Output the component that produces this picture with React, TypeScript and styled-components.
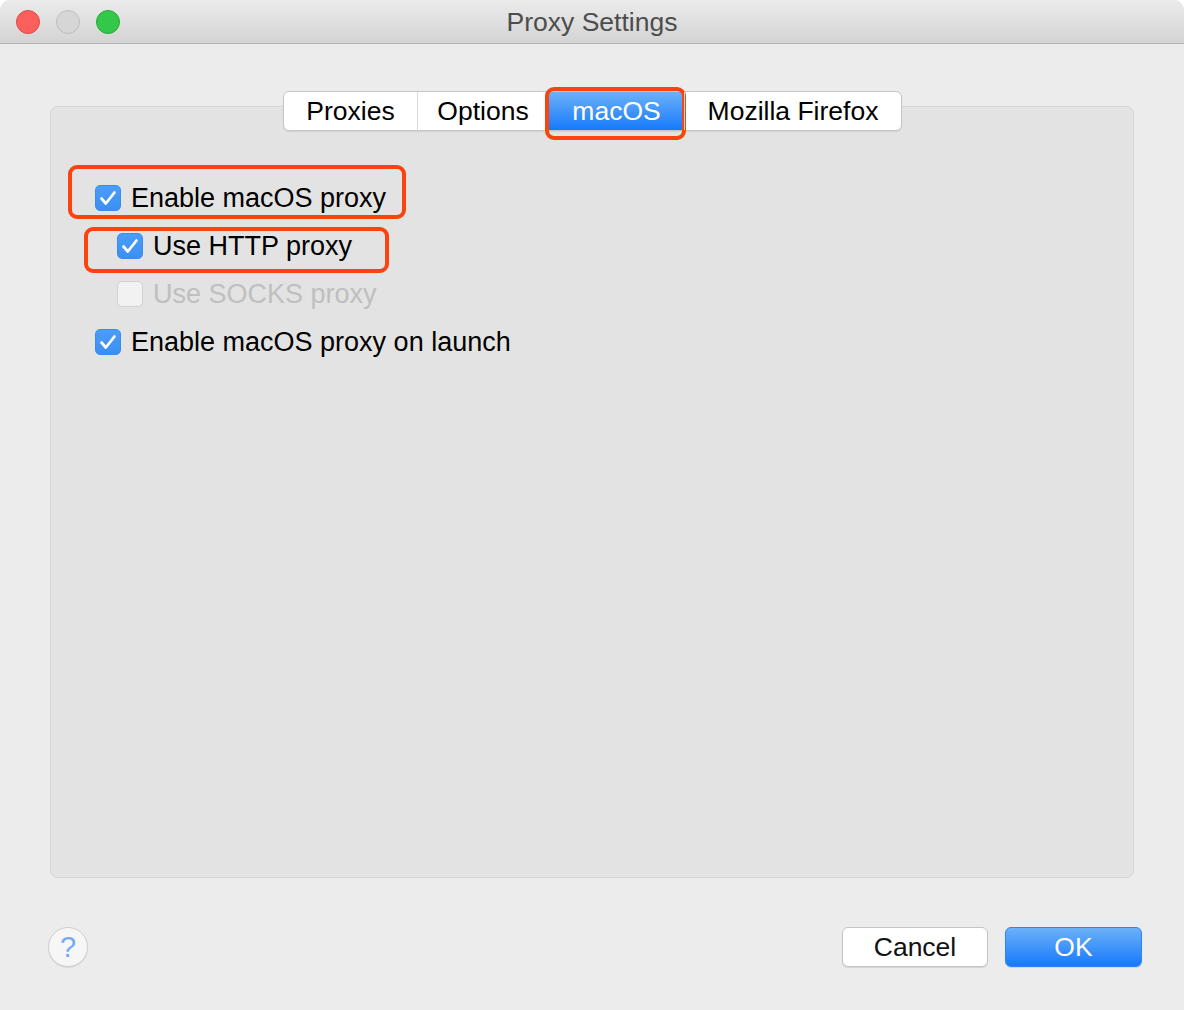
import React from 'react'
import styled, { createGlobalStyle } from 'styled-components'

const GlobalStyle = createGlobalStyle`
  html, body {
    margin: 0;
    padding: 0;
    background: #ffffff;
  }
  body {
    font-family: 'Liberation Sans', Arial, sans-serif;
  }
`

const tabs = [
  { label: 'Proxies', width: 133 },
  { label: 'Options', width: 131 },
  { label: 'macOS', width: 136, active: true },
  { label: 'Mozilla Firefox', width: 217 },
]

const options = [
  { label: 'Enable macOS proxy', checked: true, mark: '-9px -20px 3px -27px' },
  { label: 'Use HTTP proxy', checked: true, indent: true, mark: '5px -37px -3px -33px' },
  { label: 'Use SOCKS proxy', disabled: true, indent: true },
  { label: 'Enable macOS proxy on launch', checked: true },
]

function CheckIcon() {
  return (
    <svg width="26" height="26" viewBox="0 0 26 26" style={{ margin: -1 }}>
      <path
        d="M6.5 13.5 L10.8 18.5 L19.5 7.5"
        fill="none"
        stroke="#fff"
        strokeWidth="2.7"
        strokeLinecap="round"
        strokeLinejoin="round"
      />
    </svg>
  )
}

export default function App(): JSX.Element {
  return (
    <>
      <GlobalStyle />
      <Window>
        <TitleBar>
          <Lights>
            <Light color="#fc605c" edge="#de4a46" />
            <Light color="#d6d6d6" edge="#bfbfbf" />
            <Light color="#34c84a" edge="#27a935" />
          </Lights>
          <Title>Proxy Settings</Title>
        </TitleBar>

        <Body>
          <TabBar>
            {tabs.map((t) => (
              <Tab key={t.label} active={!!t.active} style={{ width: t.width }}>
                {t.label}
                {t.active && <Mark inset="-5px -2px -10px -4px" />}
              </Tab>
            ))}
          </TabBar>

          <Panel>
            {options.map((o) => (
              <Row key={o.label} indent={!!o.indent}>
                <Box checked={!!o.checked}>{o.checked && <CheckIcon />}</Box>
                <Label disabled={!!o.disabled}>{o.label}</Label>
                {o.mark && <Mark inset={o.mark} />}
              </Row>
            ))}
          </Panel>

          <Footer>
            <Help>?</Help>
            <Buttons>
              <Button>Cancel</Button>
              <Button primary>OK</Button>
            </Buttons>
          </Footer>
        </Body>
      </Window>
    </>
  )
}

const Window = styled.div`
  display: flex;
  flex-direction: column;
  width: 1184px;
  height: 1010px;
  background: #ececec;
  border-radius: 10px 10px 0 0;
  overflow: hidden;
`
const TitleBar = styled.div`
  position: relative;
  display: flex;
  align-items: center;
  justify-content: center;
  height: 43px;
  flex-shrink: 0;
  background: linear-gradient(#ebebeb, #d4d4d4);
  border-bottom: 1px solid #b4b4b4;
`
const Lights = styled.div`
  position: absolute;
  left: 16px;
  top: 10px;
  display: flex;
  gap: 16px;
`
const Light = styled.div<{ color: string; edge: string }>`
  width: 22px;
  height: 22px;
  border-radius: 50%;
  background: ${(p) => p.color};
  border: 1px solid ${(p) => p.edge};
`
const Title = styled.div`
  font-size: 26.5px;
  color: #4d4d4d;
  margin-top: 2px;
`
const Body = styled.div`
  flex: 1;
  display: flex;
  flex-direction: column;
  padding: 47px 42px 43px 50px;
`
const TabBar = styled.div`
  position: relative;
  z-index: 1;
  align-self: center;
  margin-left: -7px;
  display: flex;
  height: 40px;
  background: #fff;
  border: 1px solid #c6c6c6;
  border-radius: 6px;
  box-shadow: 0 1px 1px rgba(0, 0, 0, 0.08);
  box-sizing: border-box;
`
const Tab = styled.div<{ active: boolean }>`
  position: relative;
  display: flex;
  align-items: center;
  justify-content: center;
  box-sizing: border-box;
  font-size: 26.5px;
  color: ${(p) => (p.active ? '#fff' : '#000')};
  background: ${(p) =>
    p.active ? 'linear-gradient(#6cb1f9, #1679fb)' : 'transparent'};
  & + & {
    border-left: 1px solid #dadada;
  }
  &:first-child {
    border-radius: 5px 0 0 5px;
  }
  &:last-child {
    border-radius: 0 5px 5px 0;
  }
`
const Mark = styled.div<{ inset: string }>`
  position: absolute;
  inset: ${(p) => p.inset};
  border: 4px solid #fb420f;
  border-radius: 9px;
  pointer-events: none;
`
const Panel = styled.div`
  flex: 1;
  margin-top: -25px;
  margin-right: 8px;
  display: flex;
  flex-direction: column;
  align-items: flex-start;
  padding: 67px 0 0 44px;
  background: #e3e3e3;
  border: 1px solid #d6d6d6;
  border-radius: 8px;
`
const Row = styled.div<{ indent: boolean }>`
  position: relative;
  display: flex;
  align-items: center;
  gap: 10px;
  height: 48px;
  margin-left: ${(p) => (p.indent ? 22 : 0)}px;
`
const Box = styled.div<{ checked: boolean }>`
  width: 26px;
  height: 26px;
  box-sizing: border-box;
  border-radius: 5px;
  display: flex;
  background: ${(p) =>
    p.checked ? 'linear-gradient(#4a9ef7, #3a8ff4)' : '#f2f2f2'};
  border: 1px solid ${(p) => (p.checked ? '#3a8cf0' : '#d2d2d2')};
`
const Label = styled.span<{ disabled: boolean }>`
  font-size: 27px;
  color: ${(p) => (p.disabled ? '#bfbfbf' : '#000')};
`
const Footer = styled.div`
  display: flex;
  align-items: center;
  justify-content: space-between;
  margin-top: 49px;
  margin-left: -2px;
  height: 40px;
`
const Help = styled.div`
  width: 40px;
  height: 40px;
  box-sizing: border-box;
  border-radius: 50%;
  background: #f6f6f6;
  border: 1px solid #cfcfcf;
  box-shadow: 0 1px 1px rgba(0, 0, 0, 0.08);
  display: flex;
  align-items: center;
  justify-content: center;
  color: #72aaf6;
  font-size: 29px;
`
const Buttons = styled.div`
  display: flex;
  gap: 17px;
`
const Button = styled.div<{ primary?: boolean }>`
  width: ${(p) => (p.primary ? 137 : 146)}px;
  height: 40px;
  box-sizing: border-box;
  border-radius: 6px;
  display: flex;
  align-items: center;
  justify-content: center;
  font-size: 26.5px;
  color: ${(p) => (p.primary ? '#fff' : '#111')};
  background: ${(p) =>
    p.primary ? 'linear-gradient(#6cb1f9, #1679fb)' : '#fff'};
  border: 1px solid ${(p) => (p.primary ? '#2e84f5' : '#c4c4c4')};
  box-shadow: 0 1px 1px rgba(0, 0, 0, 0.1);
`
